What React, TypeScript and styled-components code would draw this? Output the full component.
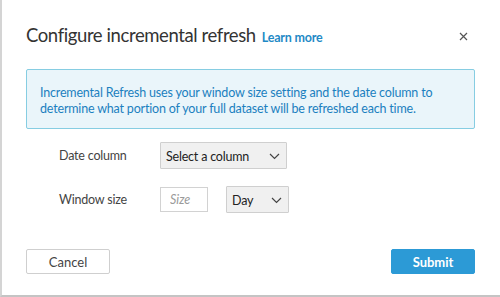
import React from 'react';
import styled, { createGlobalStyle } from 'styled-components';

const GlobalStyle = createGlobalStyle`
  html, body {
    margin: 0;
    padding: 0;
    background: #ffffff;
  }
  body {
    font-family: Lato, 'Open Sans', sans-serif;
  }
`;

const Dialog = styled.div`
  width: 500px;
  height: 297px;
  box-sizing: border-box;
  border-left: 2px solid #d4d4d4;
  border-bottom: 2px solid #c4c4c4;
  padding: 24px 25px 21px 24px;
  display: flex;
  flex-direction: column;
`;

const Header = styled.div`
  display: flex;
  align-items: baseline;
  height: 30px;
`;

const Title = styled.h2`
  margin: 0;
  font-size: 18.5px;
  letter-spacing: -0.4px;
  font-weight: 400;
  color: #333333;
`;

const LearnMore = styled.a`
  margin-left: 6px;
  font-size: 12.5px;
  letter-spacing: -0.2px;
  font-weight: 700;
  color: #1f8ac6;
  text-decoration: none;
`;

const Close = styled.button`
  margin-left: auto;
  margin-right: 7px;
  margin-top: -6px;
  border: 0;
  background: none;
  padding: 0;
  line-height: 1;
  cursor: pointer;
  display: flex;
  align-self: center;
`;

const Info = styled.div`
  margin-top: 15px;
  height: 60px;
  box-sizing: border-box;
  padding: 15px 13px 0;
  background: #eaf5fa;
  border: 1px solid #86cde2;
  border-radius: 2px;
  color: #1b80bf;
  font-size: 12.5px;
  letter-spacing: -0.18px;
  line-height: 16px;
`;

const Form = styled.div`
  display: grid;
  grid-template-columns: 101px auto;
  row-gap: 17px;
  align-items: center;
  margin-top: 13px;
  padding-left: 33px;
`;

const Label = styled.span`
  font-size: 12.5px;
  letter-spacing: -0.2px;
  color: #444444;
`;

const Controls = styled.div`
  display: flex;
  align-items: center;
  gap: 18px;
`;

const Select = styled.div<{ $width: number }>`
  width: ${p => p.$width}px;
  height: 27px;
  box-sizing: border-box;
  display: flex;
  align-items: center;
  justify-content: space-between;
  padding: 2px 6px 0 5px;
  background: #f0f0f0;
  border: 1px solid #cfcfcf;
  border-radius: 1px;
  font-size: 12.5px;
  letter-spacing: -0.2px;
  color: #222222;
`;

const SizeInput = styled.input`
  width: 48px;
  height: 25px;
  box-sizing: border-box;
  padding: 0 9px;
  border: 1px solid #d2d2d2;
  font-family: inherit;
  font-size: 12.5px;
  &::placeholder {
    color: #9a9a9a;
    font-style: italic;
  }
`;

const Footer = styled.div`
  margin-top: auto;
  display: flex;
  justify-content: space-between;
`;

const Button = styled.button<{ $primary?: boolean }>`
  width: 84px;
  height: 25px;
  box-sizing: border-box;
  border-radius: 2px;
  font-family: inherit;
  font-size: 13px;
  border: 1px solid ${p => (p.$primary ? '#2c9ad6' : '#cfcfcf')};
  background: ${p => (p.$primary ? '#2c9ad6' : '#ffffff')};
  color: ${p => (p.$primary ? '#ffffff' : '#444444')};
  font-weight: ${p => (p.$primary ? 700 : 400)};
`;

const Chevron = () => (
  <svg width="11" height="7" viewBox="0 0 11 7">
    <polyline points="1,1 5.5,5.5 10,1" fill="none" stroke="#444" strokeWidth="1.2" />
  </svg>
);

export default function App() {
  return (
    <>
      <GlobalStyle />
      <Dialog>
        <Header>
          <Title>Configure incremental refresh</Title>
          <LearnMore href="#">Learn more</LearnMore>
          <Close aria-label="Close">
            <svg width="9" height="9" viewBox="0 0 9 9">
              <path d="M1 1L8 8M8 1L1 8" stroke="#555" strokeWidth="1.2" />
            </svg>
          </Close>
        </Header>
        <Info>
          Incremental Refresh uses your window size setting and the date column to determine what portion of
          your full dataset will be refreshed each time.
        </Info>
        <Form>
          <Label>Date column</Label>
          <Controls>
            <Select $width={127}>
              Select a column <Chevron />
            </Select>
          </Controls>
          <Label>Window size</Label>
          <Controls>
            <SizeInput placeholder="Size" />
            <Select $width={63}>
              Day <Chevron />
            </Select>
          </Controls>
        </Form>
        <Footer>
          <Button>Cancel</Button>
          <Button $primary>Submit</Button>
        </Footer>
      </Dialog>
    </>
  );
}
